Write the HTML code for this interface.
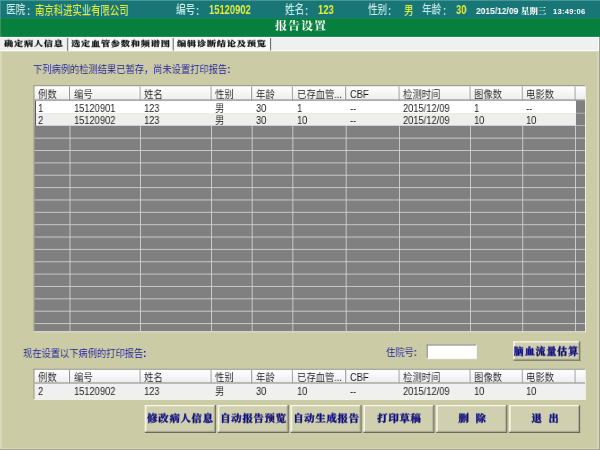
<!DOCTYPE html>
<html lang="zh-CN">
<head>
<meta charset="utf-8">
<title>报告设置</title>
<style>
html,body{margin:0;padding:0;}
body{width:600px;height:450px;overflow:hidden;background:#cbcba6;position:relative;
  font-family:"Liberation Sans","Noto Sans CJK SC",sans-serif;font-size:9.3px;color:#000;}
svg{position:absolute;left:0;top:0;}
.a{position:absolute;white-space:nowrap;transform-origin:0 0;will-change:transform;}
.lb{color:#c4ebe8;font-size:12px;line-height:14px;transform:scaleX(0.8);font-weight:500;}
.vl{color:#dcec3c;font-size:12px;line-height:14px;transform:scaleX(0.78);font-weight:500;}
.vn{color:#e2ee3c;font-size:13.4px;line-height:14px;transform:scaleX(0.70);font-weight:bold;}
.dt{color:#fff;font-size:9.5px;line-height:10px;font-weight:bold;transform:scaleX(0.89);}
.wk{color:#fff;font-size:8.4px;line-height:11px;letter-spacing:0.1px;font-family:"Liberation Serif","Noto Serif CJK SC",serif;font-weight:900;}
.tm{color:#fff;font-size:7.6px;line-height:9px;font-weight:bold;letter-spacing:0.25px;}
.sf{font-family:"Liberation Serif","Noto Serif CJK SC",serif;font-weight:900;}
.ttl{color:#fff;font-size:12px;line-height:15px;letter-spacing:1px;font-family:"Liberation Serif","Noto Serif CJK SC",serif;font-weight:700;transform:scaleY(0.9);}
.tab{-webkit-text-stroke:0.25px #141414;color:#141414;font-size:9.2px;line-height:13px;letter-spacing:0.78px;font-family:"Liberation Serif","Noto Serif CJK SC",serif;font-weight:900;transform:scaleY(0.8);}
.bl{color:#20209a;font-size:10.4px;line-height:13px;transform:scaleX(0.89);font-weight:350;}
.c{color:#1a1a1a;font-size:10.4px;line-height:12px;transform:scaleX(0.895);font-weight:350;}
.bt{-webkit-text-stroke:0.3px #10107c;color:#10107c;font-size:10.3px;text-align:center;letter-spacing:0.8px;word-spacing:2.6px;transform:scaleY(0.94);transform-origin:50% 50%;font-family:"Liberation Serif","Noto Serif CJK SC",serif;font-weight:900;}
</style>
</head>
<body>
<svg width="600" height="450" viewBox="0 0 600 450">
<defs><linearGradient id="hg" x1="0" y1="0" x2="0" y2="1"><stop offset="0" stop-color="#ffffff"/><stop offset="1" stop-color="#ececec"/></linearGradient></defs>
<rect x="0.00" y="0.00" width="600.00" height="18.30" fill="#187676"/>
<rect x="0.00" y="18.10" width="600.00" height="19.00" fill="#07803f"/>
<rect x="0.00" y="0.00" width="600.00" height="0.90" fill="#4c9a9a"/>
<rect x="0.00" y="0.00" width="0.80" height="18.00" fill="#4c9a9a"/>
<rect x="0.00" y="18.20" width="0.80" height="18.80" fill="#3c9c6c"/>
<rect x="0.00" y="36.90" width="600.00" height="14.40" fill="#ffffff"/>
<rect x="0.00" y="37.90" width="598.50" height="12.30" fill="#f0f0f0"/>
<rect x="0.00" y="51.30" width="1.70" height="398.00" fill="#dadaba"/>
<line x1="0.00" y1="448.70" x2="599.00" y2="448.70" stroke="#dcdcc4" stroke-width="0.8"/>
<line x1="0.00" y1="449.60" x2="600.00" y2="449.60" stroke="#9c9c88" stroke-width="1"/>
<line x1="598.50" y1="37.00" x2="598.50" y2="51.00" stroke="#ffffff" stroke-width="1"/>
<line x1="598.60" y1="51.00" x2="598.60" y2="449.00" stroke="#dcdcc2" stroke-width="0.9"/>
<rect x="595.70" y="51.30" width="2.60" height="397.00" fill="#d2d0ae"/>
<line x1="599.50" y1="37.00" x2="599.50" y2="450.00" stroke="#a0a48e" stroke-width="1"/>
<rect x="68.20" y="37.50" width="202.00" height="12.60" fill="#f8f8f8"/>
<line x1="585.40" y1="85.30" x2="585.40" y2="332.10" stroke="#f6f6ee" stroke-width="0.9"/>
<line x1="33.60" y1="331.70" x2="585.80" y2="331.70" stroke="#f6f6ee" stroke-width="0.9"/>
<line x1="34.10" y1="85.40" x2="34.10" y2="331.40" stroke="#8c8c8c" stroke-width="1"/>
<line x1="33.60" y1="85.80" x2="585.20" y2="85.80" stroke="#8c8c8c" stroke-width="1"/>
<rect x="34.6" y="86.30" width="550.40" height="14.10" fill="url(#hg)"/>
<line x1="34.60" y1="100.20" x2="585.00" y2="100.20" stroke="#848484" stroke-width="1.2"/>
<line x1="69.40" y1="86.60" x2="69.40" y2="100.40" stroke="#8e8e8e" stroke-width="1.1"/>
<line x1="68.50" y1="86.60" x2="68.50" y2="99.40" stroke="#ffffff" stroke-width="0.8"/>
<line x1="139.90" y1="86.60" x2="139.90" y2="100.40" stroke="#8e8e8e" stroke-width="1.1"/>
<line x1="139.00" y1="86.60" x2="139.00" y2="99.40" stroke="#ffffff" stroke-width="0.8"/>
<line x1="210.90" y1="86.60" x2="210.90" y2="100.40" stroke="#8e8e8e" stroke-width="1.1"/>
<line x1="210.00" y1="86.60" x2="210.00" y2="99.40" stroke="#ffffff" stroke-width="0.8"/>
<line x1="251.60" y1="86.60" x2="251.60" y2="100.40" stroke="#8e8e8e" stroke-width="1.1"/>
<line x1="250.70" y1="86.60" x2="250.70" y2="99.40" stroke="#ffffff" stroke-width="0.8"/>
<line x1="292.20" y1="86.60" x2="292.20" y2="100.40" stroke="#8e8e8e" stroke-width="1.1"/>
<line x1="291.30" y1="86.60" x2="291.30" y2="99.40" stroke="#ffffff" stroke-width="0.8"/>
<line x1="345.60" y1="86.60" x2="345.60" y2="100.40" stroke="#8e8e8e" stroke-width="1.1"/>
<line x1="344.70" y1="86.60" x2="344.70" y2="99.40" stroke="#ffffff" stroke-width="0.8"/>
<line x1="398.90" y1="86.60" x2="398.90" y2="100.40" stroke="#8e8e8e" stroke-width="1.1"/>
<line x1="398.00" y1="86.60" x2="398.00" y2="99.40" stroke="#ffffff" stroke-width="0.8"/>
<line x1="469.90" y1="86.60" x2="469.90" y2="100.40" stroke="#8e8e8e" stroke-width="1.1"/>
<line x1="469.00" y1="86.60" x2="469.00" y2="99.40" stroke="#ffffff" stroke-width="0.8"/>
<line x1="522.10" y1="86.60" x2="522.10" y2="100.40" stroke="#8e8e8e" stroke-width="1.1"/>
<line x1="521.20" y1="86.60" x2="521.20" y2="99.40" stroke="#ffffff" stroke-width="0.8"/>
<line x1="574.90" y1="86.60" x2="574.90" y2="100.40" stroke="#8e8e8e" stroke-width="1.1"/>
<line x1="574.00" y1="86.60" x2="574.00" y2="99.40" stroke="#ffffff" stroke-width="0.8"/>
<rect x="34.60" y="100.80" width="541.40" height="12.80" fill="#ffffff"/>
<rect x="576.00" y="100.80" width="9.00" height="12.80" fill="#808080"/>
<line x1="576.00" y1="113.30" x2="585.00" y2="113.30" stroke="#c4c4c4" stroke-width="0.9"/>
<rect x="34.60" y="113.60" width="541.40" height="12.20" fill="#eeeeee"/>
<rect x="576.00" y="113.60" width="9.00" height="12.20" fill="#808080"/>
<line x1="576.00" y1="125.50" x2="585.00" y2="125.50" stroke="#c4c4c4" stroke-width="0.9"/>
<line x1="35.40" y1="100.80" x2="35.40" y2="125.80" stroke="#505050" stroke-width="1.1"/>
<rect x="34.60" y="125.80" width="550.40" height="205.40" fill="#808080"/>
<line x1="34.60" y1="138.16" x2="585.00" y2="138.16" stroke="#c8c8c8" stroke-width="1"/>
<line x1="34.60" y1="150.52" x2="585.00" y2="150.52" stroke="#c8c8c8" stroke-width="1"/>
<line x1="34.60" y1="162.88" x2="585.00" y2="162.88" stroke="#c8c8c8" stroke-width="1"/>
<line x1="34.60" y1="175.24" x2="585.00" y2="175.24" stroke="#c8c8c8" stroke-width="1"/>
<line x1="34.60" y1="187.60" x2="585.00" y2="187.60" stroke="#c8c8c8" stroke-width="1"/>
<line x1="34.60" y1="199.96" x2="585.00" y2="199.96" stroke="#c8c8c8" stroke-width="1"/>
<line x1="34.60" y1="212.32" x2="585.00" y2="212.32" stroke="#c8c8c8" stroke-width="1"/>
<line x1="34.60" y1="224.68" x2="585.00" y2="224.68" stroke="#c8c8c8" stroke-width="1"/>
<line x1="34.60" y1="237.04" x2="585.00" y2="237.04" stroke="#c8c8c8" stroke-width="1"/>
<line x1="34.60" y1="249.40" x2="585.00" y2="249.40" stroke="#c8c8c8" stroke-width="1"/>
<line x1="34.60" y1="261.76" x2="585.00" y2="261.76" stroke="#c8c8c8" stroke-width="1"/>
<line x1="34.60" y1="274.12" x2="585.00" y2="274.12" stroke="#c8c8c8" stroke-width="1"/>
<line x1="34.60" y1="286.48" x2="585.00" y2="286.48" stroke="#c8c8c8" stroke-width="1"/>
<line x1="34.60" y1="298.84" x2="585.00" y2="298.84" stroke="#c8c8c8" stroke-width="1"/>
<line x1="34.60" y1="311.20" x2="585.00" y2="311.20" stroke="#c8c8c8" stroke-width="1"/>
<line x1="34.60" y1="323.56" x2="585.00" y2="323.56" stroke="#c8c8c8" stroke-width="1"/>
<line x1="70.00" y1="125.80" x2="70.00" y2="331.20" stroke="#d0d0d0" stroke-width="0.9"/>
<line x1="140.50" y1="125.80" x2="140.50" y2="331.20" stroke="#d0d0d0" stroke-width="0.9"/>
<line x1="211.50" y1="125.80" x2="211.50" y2="331.20" stroke="#d0d0d0" stroke-width="0.9"/>
<line x1="252.20" y1="125.80" x2="252.20" y2="331.20" stroke="#d0d0d0" stroke-width="0.9"/>
<line x1="292.80" y1="125.80" x2="292.80" y2="331.20" stroke="#d0d0d0" stroke-width="0.9"/>
<line x1="346.20" y1="125.80" x2="346.20" y2="331.20" stroke="#d0d0d0" stroke-width="0.9"/>
<line x1="399.50" y1="125.80" x2="399.50" y2="331.20" stroke="#d0d0d0" stroke-width="0.9"/>
<line x1="470.50" y1="125.80" x2="470.50" y2="331.20" stroke="#d0d0d0" stroke-width="0.9"/>
<line x1="522.70" y1="125.80" x2="522.70" y2="331.20" stroke="#d0d0d0" stroke-width="0.9"/>
<line x1="575.50" y1="125.80" x2="575.50" y2="331.20" stroke="#d0d0d0" stroke-width="0.9"/>
<line x1="585.40" y1="368.80" x2="585.40" y2="399.90" stroke="#f6f6ee" stroke-width="0.9"/>
<line x1="33.60" y1="399.50" x2="585.80" y2="399.50" stroke="#f6f6ee" stroke-width="0.9"/>
<line x1="34.10" y1="368.90" x2="34.10" y2="399.20" stroke="#8c8c8c" stroke-width="1"/>
<line x1="33.60" y1="369.30" x2="585.20" y2="369.30" stroke="#8c8c8c" stroke-width="1"/>
<rect x="34.6" y="369.80" width="550.40" height="13.50" fill="url(#hg)"/>
<line x1="34.60" y1="383.10" x2="585.00" y2="383.10" stroke="#848484" stroke-width="1.2"/>
<line x1="69.40" y1="370.10" x2="69.40" y2="383.30" stroke="#8e8e8e" stroke-width="1.1"/>
<line x1="68.50" y1="370.10" x2="68.50" y2="382.30" stroke="#ffffff" stroke-width="0.8"/>
<line x1="139.90" y1="370.10" x2="139.90" y2="383.30" stroke="#8e8e8e" stroke-width="1.1"/>
<line x1="139.00" y1="370.10" x2="139.00" y2="382.30" stroke="#ffffff" stroke-width="0.8"/>
<line x1="210.90" y1="370.10" x2="210.90" y2="383.30" stroke="#8e8e8e" stroke-width="1.1"/>
<line x1="210.00" y1="370.10" x2="210.00" y2="382.30" stroke="#ffffff" stroke-width="0.8"/>
<line x1="251.60" y1="370.10" x2="251.60" y2="383.30" stroke="#8e8e8e" stroke-width="1.1"/>
<line x1="250.70" y1="370.10" x2="250.70" y2="382.30" stroke="#ffffff" stroke-width="0.8"/>
<line x1="292.20" y1="370.10" x2="292.20" y2="383.30" stroke="#8e8e8e" stroke-width="1.1"/>
<line x1="291.30" y1="370.10" x2="291.30" y2="382.30" stroke="#ffffff" stroke-width="0.8"/>
<line x1="345.60" y1="370.10" x2="345.60" y2="383.30" stroke="#8e8e8e" stroke-width="1.1"/>
<line x1="344.70" y1="370.10" x2="344.70" y2="382.30" stroke="#ffffff" stroke-width="0.8"/>
<line x1="398.90" y1="370.10" x2="398.90" y2="383.30" stroke="#8e8e8e" stroke-width="1.1"/>
<line x1="398.00" y1="370.10" x2="398.00" y2="382.30" stroke="#ffffff" stroke-width="0.8"/>
<line x1="469.90" y1="370.10" x2="469.90" y2="383.30" stroke="#8e8e8e" stroke-width="1.1"/>
<line x1="469.00" y1="370.10" x2="469.00" y2="382.30" stroke="#ffffff" stroke-width="0.8"/>
<line x1="522.10" y1="370.10" x2="522.10" y2="383.30" stroke="#8e8e8e" stroke-width="1.1"/>
<line x1="521.20" y1="370.10" x2="521.20" y2="382.30" stroke="#ffffff" stroke-width="0.8"/>
<line x1="574.90" y1="370.10" x2="574.90" y2="383.30" stroke="#8e8e8e" stroke-width="1.1"/>
<line x1="574.00" y1="370.10" x2="574.00" y2="382.30" stroke="#ffffff" stroke-width="0.8"/>
<rect x="34.60" y="383.60" width="550.40" height="15.40" fill="#f0f0f0"/>
<line x1="67.60" y1="37.80" x2="67.60" y2="51.00" stroke="#858585" stroke-width="1.3"/>
<line x1="173.20" y1="38.00" x2="173.20" y2="50.50" stroke="#606060" stroke-width="1"/>
<line x1="270.60" y1="38.00" x2="270.60" y2="50.50" stroke="#606060" stroke-width="1"/>
<rect x="426.80" y="344.60" width="50.00" height="14.30" fill="#ffffff"/>
<line x1="426.80" y1="345.00" x2="476.80" y2="345.00" stroke="#7a7a7a" stroke-width="1"/>
<line x1="427.20" y1="344.60" x2="427.20" y2="358.90" stroke="#7a7a7a" stroke-width="1"/>
<line x1="426.80" y1="358.70" x2="476.80" y2="358.70" stroke="#f4f4ec" stroke-width="1"/>
<line x1="476.50" y1="344.60" x2="476.50" y2="358.90" stroke="#f4f4ec" stroke-width="1"/>
<rect x="144.80" y="405.10" width="71.00" height="27.70" fill="#d0d0b1"/>
<line x1="144.80" y1="405.70" x2="215.80" y2="405.70" stroke="#f8f8ea" stroke-width="1.3"/>
<line x1="145.60" y1="405.10" x2="145.60" y2="432.80" stroke="#f6f6e4" stroke-width="1.7"/>
<line x1="144.80" y1="432.30" x2="215.80" y2="432.30" stroke="#6a6a5c" stroke-width="1.2"/>
<line x1="215.30" y1="405.10" x2="215.30" y2="432.80" stroke="#6a6a5c" stroke-width="1.2"/>
<line x1="146.00" y1="431.30" x2="214.80" y2="431.30" stroke="#a4a490" stroke-width="0.8"/>
<line x1="214.30" y1="406.30" x2="214.30" y2="431.80" stroke="#a4a490" stroke-width="0.8"/>
<rect x="217.65" y="405.10" width="71.00" height="27.70" fill="#d0d0b1"/>
<line x1="217.65" y1="405.70" x2="288.65" y2="405.70" stroke="#f8f8ea" stroke-width="1.3"/>
<line x1="218.45" y1="405.10" x2="218.45" y2="432.80" stroke="#f6f6e4" stroke-width="1.7"/>
<line x1="217.65" y1="432.30" x2="288.65" y2="432.30" stroke="#6a6a5c" stroke-width="1.2"/>
<line x1="288.15" y1="405.10" x2="288.15" y2="432.80" stroke="#6a6a5c" stroke-width="1.2"/>
<line x1="218.85" y1="431.30" x2="287.65" y2="431.30" stroke="#a4a490" stroke-width="0.8"/>
<line x1="287.15" y1="406.30" x2="287.15" y2="431.80" stroke="#a4a490" stroke-width="0.8"/>
<rect x="290.50" y="405.10" width="71.00" height="27.70" fill="#d0d0b1"/>
<line x1="290.50" y1="405.70" x2="361.50" y2="405.70" stroke="#f8f8ea" stroke-width="1.3"/>
<line x1="291.30" y1="405.10" x2="291.30" y2="432.80" stroke="#f6f6e4" stroke-width="1.7"/>
<line x1="290.50" y1="432.30" x2="361.50" y2="432.30" stroke="#6a6a5c" stroke-width="1.2"/>
<line x1="361.00" y1="405.10" x2="361.00" y2="432.80" stroke="#6a6a5c" stroke-width="1.2"/>
<line x1="291.70" y1="431.30" x2="360.50" y2="431.30" stroke="#a4a490" stroke-width="0.8"/>
<line x1="360.00" y1="406.30" x2="360.00" y2="431.80" stroke="#a4a490" stroke-width="0.8"/>
<rect x="363.35" y="405.10" width="71.00" height="27.70" fill="#d0d0b1"/>
<line x1="363.35" y1="405.70" x2="434.35" y2="405.70" stroke="#f8f8ea" stroke-width="1.3"/>
<line x1="364.15" y1="405.10" x2="364.15" y2="432.80" stroke="#f6f6e4" stroke-width="1.7"/>
<line x1="363.35" y1="432.30" x2="434.35" y2="432.30" stroke="#6a6a5c" stroke-width="1.2"/>
<line x1="433.85" y1="405.10" x2="433.85" y2="432.80" stroke="#6a6a5c" stroke-width="1.2"/>
<line x1="364.55" y1="431.30" x2="433.35" y2="431.30" stroke="#a4a490" stroke-width="0.8"/>
<line x1="432.85" y1="406.30" x2="432.85" y2="431.80" stroke="#a4a490" stroke-width="0.8"/>
<rect x="436.20" y="405.10" width="71.00" height="27.70" fill="#d0d0b1"/>
<line x1="436.20" y1="405.70" x2="507.20" y2="405.70" stroke="#f8f8ea" stroke-width="1.3"/>
<line x1="437.00" y1="405.10" x2="437.00" y2="432.80" stroke="#f6f6e4" stroke-width="1.7"/>
<line x1="436.20" y1="432.30" x2="507.20" y2="432.30" stroke="#6a6a5c" stroke-width="1.2"/>
<line x1="506.70" y1="405.10" x2="506.70" y2="432.80" stroke="#6a6a5c" stroke-width="1.2"/>
<line x1="437.40" y1="431.30" x2="506.20" y2="431.30" stroke="#a4a490" stroke-width="0.8"/>
<line x1="505.70" y1="406.30" x2="505.70" y2="431.80" stroke="#a4a490" stroke-width="0.8"/>
<rect x="509.05" y="405.10" width="71.00" height="27.70" fill="#d0d0b1"/>
<line x1="509.05" y1="405.70" x2="580.05" y2="405.70" stroke="#f8f8ea" stroke-width="1.3"/>
<line x1="509.85" y1="405.10" x2="509.85" y2="432.80" stroke="#f6f6e4" stroke-width="1.7"/>
<line x1="509.05" y1="432.30" x2="580.05" y2="432.30" stroke="#6a6a5c" stroke-width="1.2"/>
<line x1="579.55" y1="405.10" x2="579.55" y2="432.80" stroke="#6a6a5c" stroke-width="1.2"/>
<line x1="510.25" y1="431.30" x2="579.05" y2="431.30" stroke="#a4a490" stroke-width="0.8"/>
<line x1="578.55" y1="406.30" x2="578.55" y2="431.80" stroke="#a4a490" stroke-width="0.8"/>
<rect x="513.30" y="341.20" width="66.90" height="19.50" fill="#d0d0b1"/>
<line x1="513.30" y1="341.80" x2="580.20" y2="341.80" stroke="#f8f8ea" stroke-width="1.3"/>
<line x1="514.10" y1="341.20" x2="514.10" y2="360.70" stroke="#f6f6e4" stroke-width="1.7"/>
<line x1="513.30" y1="360.20" x2="580.20" y2="360.20" stroke="#6a6a5c" stroke-width="1.2"/>
<line x1="579.70" y1="341.20" x2="579.70" y2="360.70" stroke="#6a6a5c" stroke-width="1.2"/>
<line x1="514.50" y1="359.20" x2="579.20" y2="359.20" stroke="#a4a490" stroke-width="0.8"/>
<line x1="578.70" y1="342.40" x2="578.70" y2="359.70" stroke="#a4a490" stroke-width="0.8"/>
</svg>
<div class="a lb" style="left:6px;top:3.3px;">医院</div>
<div class="a lb" style="left:26.8px;top:4px;font-weight:900">:</div>
<div class="a vl" style="left:34.8px;top:4.0px;">南京科进实业有限公司</div>
<div class="a lb" style="left:175.5px;top:3.3px;">编号</div>
<div class="a lb" style="left:195.8px;top:4px;font-weight:900">:</div>
<div class="a vn" style="left:208.6px;top:3.0px;">15120902</div>
<div class="a lb" style="left:285px;top:3.3px;">姓名</div>
<div class="a lb" style="left:305.3px;top:4px;font-weight:900">:</div>
<div class="a vn" style="left:317.5px;top:3.0px;">123</div>
<div class="a lb" style="left:368px;top:3.3px;">性别</div>
<div class="a lb" style="left:388.3px;top:4px;font-weight:900">:</div>
<div class="a vl" style="left:403.6px;top:4.0px;">男</div>
<div class="a lb" style="left:422px;top:3.3px;">年龄</div>
<div class="a lb" style="left:442.8px;top:4px;font-weight:900">:</div>
<div class="a vn" style="left:455.5px;top:3.0px;">30</div>
<div class="a dt" style="left:475.6px;top:6.2px;">2015/12/09</div>
<div class="a wk" style="left:521px;top:6.4px;">星期三</div>
<div class="a tm" style="left:553px;top:6.9px;">13:49:06</div>
<div class="a ttl" style="left:275px;top:19.7px;">报告设置</div>
<div class="a tab" style="left:3.6px;top:39.4px;">确定病人信息</div>
<div class="a tab" style="left:71.2px;top:39.4px;">选定血管参数和频谱图</div>
<div class="a tab" style="left:177.2px;top:39.4px;">编辑诊断结论及预览</div>
<div class="a bl" style="left:33.4px;top:63.1px;">下列病例的检测结果已暂存，尚未设置打印报告<b>:</b></div>
<div class="a bl" style="left:23px;top:347.1px;">现在设置以下病例的打印报告<b>:</b></div>
<div class="a bl" style="left:385.6px;top:345.8px;">住院号<b>:</b></div>
<div class="a c" style="left:38.2px;top:88.6px;">例数</div>
<div class="a c" style="left:73.7px;top:88.6px;">编号</div>
<div class="a c" style="left:144.2px;top:88.6px;">姓名</div>
<div class="a c" style="left:215.2px;top:88.6px;">性别</div>
<div class="a c" style="left:255.9px;top:88.6px;">年龄</div>
<div class="a c" style="left:296.5px;top:88.6px;">已存血管...</div>
<div class="a c" style="left:349.9px;top:88.6px;">CBF</div>
<div class="a c" style="left:403.2px;top:88.6px;">检测时间</div>
<div class="a c" style="left:474.2px;top:88.6px;">图像数</div>
<div class="a c" style="left:526.4px;top:88.6px;">电影数</div>
<div class="a c" style="left:37.5px;top:102.8px;">1</div>
<div class="a c" style="left:73.7px;top:102.8px;">15120901</div>
<div class="a c" style="left:144.2px;top:102.8px;">123</div>
<div class="a c" style="left:215.2px;top:102.8px;">男</div>
<div class="a c" style="left:255.9px;top:102.8px;">30</div>
<div class="a c" style="left:296.5px;top:102.8px;">1</div>
<div class="a c" style="left:349.9px;top:102.8px;">--</div>
<div class="a c" style="left:403.2px;top:102.8px;">2015/12/09</div>
<div class="a c" style="left:474.2px;top:102.8px;">1</div>
<div class="a c" style="left:526.4px;top:102.8px;">--</div>
<div class="a c" style="left:37.5px;top:115.2px;">2</div>
<div class="a c" style="left:73.7px;top:115.2px;">15120902</div>
<div class="a c" style="left:144.2px;top:115.2px;">123</div>
<div class="a c" style="left:215.2px;top:115.2px;">男</div>
<div class="a c" style="left:255.9px;top:115.2px;">30</div>
<div class="a c" style="left:296.5px;top:115.2px;">10</div>
<div class="a c" style="left:349.9px;top:115.2px;">--</div>
<div class="a c" style="left:403.2px;top:115.2px;">2015/12/09</div>
<div class="a c" style="left:474.2px;top:115.2px;">10</div>
<div class="a c" style="left:526.4px;top:115.2px;">10</div>
<div class="a c" style="left:38.2px;top:371.5px;">例数</div>
<div class="a c" style="left:73.7px;top:371.5px;">编号</div>
<div class="a c" style="left:144.2px;top:371.5px;">姓名</div>
<div class="a c" style="left:215.2px;top:371.5px;">性别</div>
<div class="a c" style="left:255.9px;top:371.5px;">年龄</div>
<div class="a c" style="left:296.5px;top:371.5px;">已存血管...</div>
<div class="a c" style="left:349.9px;top:371.5px;">CBF</div>
<div class="a c" style="left:403.2px;top:371.5px;">检测时间</div>
<div class="a c" style="left:474.2px;top:371.5px;">图像数</div>
<div class="a c" style="left:526.4px;top:371.5px;">电影数</div>
<div class="a c" style="left:37.5px;top:386.0px;">2</div>
<div class="a c" style="left:73.7px;top:386.0px;">15120902</div>
<div class="a c" style="left:144.2px;top:386.0px;">123</div>
<div class="a c" style="left:215.2px;top:386.0px;">男</div>
<div class="a c" style="left:255.9px;top:386.0px;">30</div>
<div class="a c" style="left:296.5px;top:386.0px;">10</div>
<div class="a c" style="left:349.9px;top:386.0px;">--</div>
<div class="a c" style="left:403.2px;top:386.0px;">2015/12/09</div>
<div class="a c" style="left:474.2px;top:386.0px;">10</div>
<div class="a c" style="left:526.4px;top:386.0px;">10</div>
<div class="a bt" style="left:145.4px;top:405.2px;width:71px;height:27.2px;line-height:27.2px">修改病人信息</div>
<div class="a bt" style="left:218.2px;top:405.2px;width:71px;height:27.2px;line-height:27.2px">自动报告预览</div>
<div class="a bt" style="left:291.1px;top:405.2px;width:71px;height:27.2px;line-height:27.2px">自动生成报告</div>
<div class="a bt" style="left:364.0px;top:405.2px;width:71px;height:27.2px;line-height:27.2px">打印草稿</div>
<div class="a bt" style="left:436.8px;top:405.2px;width:71px;height:27.2px;line-height:27.2px">删 除</div>
<div class="a bt" style="left:509.7px;top:405.2px;width:71px;height:27.2px;line-height:27.2px">退 出</div>
<div class="a bt" style="left:513.3px;top:342.2px;width:66.9px;height:19.5px;line-height:19.5px;font-size:10px;letter-spacing:0.9px">脑血流量估算</div>
</body>
</html>
